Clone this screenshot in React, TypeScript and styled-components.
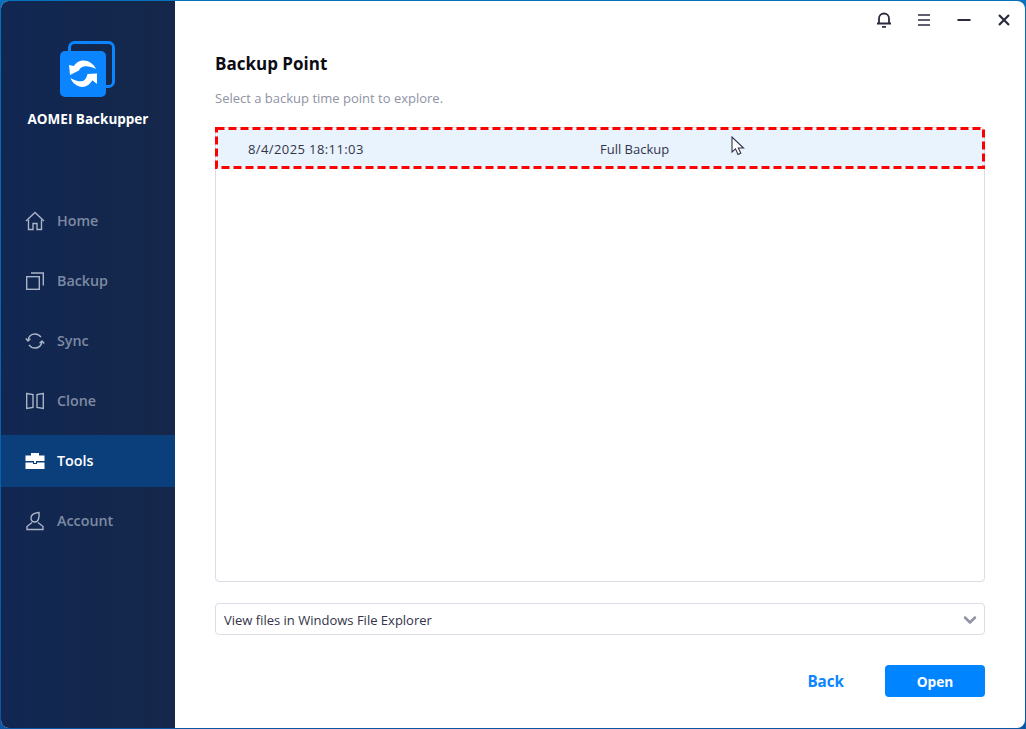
import React from 'react';
import styled, { createGlobalStyle } from 'styled-components';
import { ChevronDown } from 'lucide-react';

const GlobalStyle = createGlobalStyle`
  html, body {
    margin: 0;
    padding: 0;
    background: #0a5ca8;
  }
  * {
    box-sizing: border-box;
  }
`;

const Frame = styled.div`
  width: 1026px;
  height: 729px;
  padding: 1px;
  background: linear-gradient(180deg, #0572bb 0%, #0a57a5 100%);
  font-family: 'Open Sans', 'Noto Sans', sans-serif;
`;

const Window = styled.div`
  width: 100%;
  height: 100%;
  display: flex;
  background: #fff;
  border-radius: 8px;
  overflow: hidden;
`;

const Sidebar = styled.aside`
  width: 174px;
  flex-shrink: 0;
  display: flex;
  flex-direction: column;
  background: linear-gradient(90deg, #112752 0%, #15274a 100%);
`;

const Brand = styled.div`
  height: 194px;
  padding-top: 40px;
  display: flex;
  flex-direction: column;
  align-items: center;
`;

const BrandName = styled.div`
  margin-top: 12px;
  color: #fff;
  font-size: 13.5px;
  font-weight: 700;
  line-height: 20px;
`;

const Nav = styled.nav`
  display: flex;
  flex-direction: column;
  gap: 8px;
`;

const NavItem = styled.div<{ $active?: boolean }>`
  height: 52px;
  padding: 0 0 1px 24px;
  display: flex;
  align-items: center;
  gap: 12px;
  font-size: 14.3px;
  font-weight: 600;
  color: ${(p) => (p.$active ? '#fff' : '#7d8aa3')};
  background: ${(p) => (p.$active ? '#0b3f7c' : 'transparent')};
  svg {
    flex-shrink: 0;
  }
`;

const Main = styled.main`
  flex: 1;
  min-width: 0;
  display: flex;
  flex-direction: column;
  padding: 0 40px;
`;

const TitleBar = styled.div`
  height: 38px;
  margin-right: -40px;
  padding-right: 13px;
  display: flex;
  align-items: center;
  justify-content: flex-end;
  gap: 24px;
  color: #2b2b40;
`;

const Title = styled.h1`
  margin: 13px 0 0;
  font-size: 17px;
  font-weight: 700;
  line-height: 24px;
  color: #0c0c14;
`;

const Subtitle = styled.p`
  margin: 13px 0 0;
  font-size: 13px;
  line-height: 18px;
  color: #8f93a3;
`;

const ListBox = styled.div`
  margin-top: 20px;
  height: 455px;
  border: 1px solid #d8dde6;
  border-radius: 4px;
  position: relative;
`;

const Row = styled.div`
  height: 40px;
  margin: 1px 0 0 1px;
  display: flex;
  align-items: center;
  padding-left: 31px;
  background: #e8f3fd;
  color: #33334a;
  font-size: 13px;
`;

const DateCell = styled.span`
  width: 352px;
  letter-spacing: 0.4px;
`;

const Highlight = styled.div`
  position: absolute;
  left: -1px;
  top: -1px;
  pointer-events: none;
`;

const Cursor = styled.svg`
  position: absolute;
  left: 515px;
  top: 8px;
`;

const Dropdown = styled.div`
  margin-top: 21px;
  height: 32px;
  border: 1px solid #d8dde6;
  border-radius: 4px;
  padding: 1px 4px 0 8px;
  display: flex;
  align-items: center;
  justify-content: space-between;
  font-size: 13px;
  color: #33334a;
`;

const Footer = styled.div`
  margin-top: 30px;
  display: flex;
  align-items: center;
  justify-content: flex-end;
  gap: 41px;
`;

const BackButton = styled.button`
  border: none;
  background: none;
  padding: 0;
  font: inherit;
  font-size: 15.2px;
  font-weight: 700;
  color: #0a84ff;
`;

const OpenButton = styled.button`
  width: 100px;
  height: 32px;
  border: none;
  border-radius: 4px;
  background: #0084ff;
  font: inherit;
  font-size: 13.7px;
  font-weight: 700;
  color: #fff;
`;

const Logo = () => (
  <svg width="56" height="56" viewBox="0 0 56 56" fill="none">
    <rect x="9.5" y="1.5" width="44" height="44" rx="5" stroke="#0a84ff" strokeWidth="3" />
    <rect x="0" y="10" width="46" height="46" rx="5" fill="#0a84ff" />
    <path d="M9 24 14 25C16.500 21 20 19.500 23.500 19.500 28.500 19.500 33.500 22.500 36 28 32 26 28 25 25 25.300 22 25.600 20 27 19 29.500L10 34Z" fill="#fff" />
    <path d="M37 43 32.300 39.300C29.500 44 26 46 22.500 46 17.500 46 12.500 42.500 10.500 37 14.500 39.500 18.500 40.500 21.500 40.300 24.500 40 26.500 37.500 27.500 33L37 32.500Z" fill="#fff" />
  </svg>
);

const HomeIcon = () => (
  <svg width="20" height="20" viewBox="0 0 20 20" fill="none" stroke="#a9b4c6" strokeWidth="1.4">
    <path d="M1 10 10 1.500 19 10" />
    <path d="M3.500 8.500V18.500H8V12.500H12V18.500H16.500V8.500" />
  </svg>
);

const BackupIcon = () => (
  <svg width="20" height="20" viewBox="0 0 20 20" fill="none" stroke="#a9b4c6" strokeWidth="1.4">
    <rect x="1.700" y="5.700" width="12.600" height="12.600" />
    <path d="M6 2h12.300v12.500" />
  </svg>
);

const SyncIcon = () => (
  <svg width="20" height="20" viewBox="0 0 20 20" fill="none" stroke="#a9b4c6" strokeWidth="1.4">
    <path d="M3 9c.8-3.600 3.600-6 7-6 2.600 0 4.600 1.200 6 3.200" />
    <path d="M17 11c-.8 3.600-3.600 6-7 6-2.600 0-4.600-1.200-6-3.200" />
    <path d="M0.800 7.500 3 10l2.400-2.200" />
    <path d="M14.600 12.200 17 10l2.200 2.500" />
  </svg>
);

const CloneIcon = () => (
  <svg width="20" height="20" viewBox="0 0 20 20" fill="none" stroke="#a9b4c6" strokeWidth="1.4">
    <path d="M1.700 2.500 8 3.500V16.500L1.700 17.500Z" />
    <path d="M18.300 2.500 12 3.500V16.500L18.300 17.500Z" />
  </svg>
);

const ToolsIcon = () => (
  <svg width="20" height="20" viewBox="0 0 20 20" fill="#fff">
    <path d="M6 4.500V2h8v2.500h5.500V10H0.500V4.500Z" />
    <path d="M0.500 11.500H8V13h4v-1.500h7.500V18H0.500Z" />
    <rect x="9" y="10" width="2" height="2" />
  </svg>
);

const AccountIcon = () => (
  <svg width="20" height="20" viewBox="0 0 20 20" fill="none" stroke="#a9b4c6" strokeWidth="1.4">
    <path d="M6 7c0-3 2.500-5 8-5.500C14.500 6 13.500 11 10 11 7.500 11 6 9.500 6 7Z" />
    <path d="M7 11.500 2 15.500V18.500H18V15.500L13 11.500" />
  </svg>
);

const BellIcon = () => (
  <svg width="16" height="16" viewBox="0 0 16 16" fill="none" stroke="currentColor" strokeWidth="1.8">
    <path d="M3 11V6.500a5 5 0 0 1 10 0V11" />
    <path d="M1 11.500h14" />
    <path d="M6 14.800h4" />
  </svg>
);

const MenuIcon = () => (
  <svg width="16" height="16" viewBox="0 0 16 16" stroke="currentColor" strokeWidth="1.6">
    <path d="M2 3h12M2 8h12M2 13h12" />
  </svg>
);

const MinimizeIcon = () => (
  <svg width="16" height="16" viewBox="0 0 16 16" stroke="currentColor" strokeWidth="1.8">
    <path d="M1.500 8h13" />
  </svg>
);

const CloseIcon = () => (
  <svg width="16" height="16" viewBox="0 0 16 16" stroke="currentColor" strokeWidth="2.200">
    <path d="M3 3l10 10M13 3 3 13" />
  </svg>
);

const App: React.FC = () => {
  return (
    <Frame>
      <GlobalStyle />
      <Window>
        <Sidebar>
          <Brand>
            <Logo />
            <BrandName>AOMEI Backupper</BrandName>
          </Brand>
          <Nav>
            <NavItem><HomeIcon />Home</NavItem>
            <NavItem><BackupIcon />Backup</NavItem>
            <NavItem><SyncIcon />Sync</NavItem>
            <NavItem><CloneIcon />Clone</NavItem>
            <NavItem $active><ToolsIcon />Tools</NavItem>
            <NavItem><AccountIcon />Account</NavItem>
          </Nav>
        </Sidebar>
        <Main>
          <TitleBar>
            <BellIcon />
            <MenuIcon />
            <MinimizeIcon />
            <CloseIcon />
          </TitleBar>
          <Title>Backup Point</Title>
          <Subtitle>Select a backup time point to explore.</Subtitle>
          <ListBox>
            <Row>
              <DateCell>8/4/2025 18:11:03</DateCell>
              <span>Full Backup</span>
            </Row>
            <Highlight>
              <svg width="770" height="42" viewBox="0 0 770 42" fill="none">
                <rect x="1.500" y="1.500" width="767" height="39" stroke="#ff0000" strokeWidth="3" strokeDasharray="8 4" />
              </svg>
            </Highlight>
            <Cursor width="14" height="22" viewBox="0 0 14 22">
              <path d="M1 1V16L4.500 12.800 7 18.500 9.800 17.200 7.300 12H12.500Z" fill="#fff" stroke="#33334a" strokeWidth="1.100" />
            </Cursor>
          </ListBox>
          <Dropdown>
            <span>View files in Windows File Explorer</span>
            <ChevronDown size={20} color="#8f93a3" strokeWidth={3} />
          </Dropdown>
          <Footer>
            <BackButton>Back</BackButton>
            <OpenButton>Open</OpenButton>
          </Footer>
        </Main>
      </Window>
    </Frame>
  );
};

export default App;
